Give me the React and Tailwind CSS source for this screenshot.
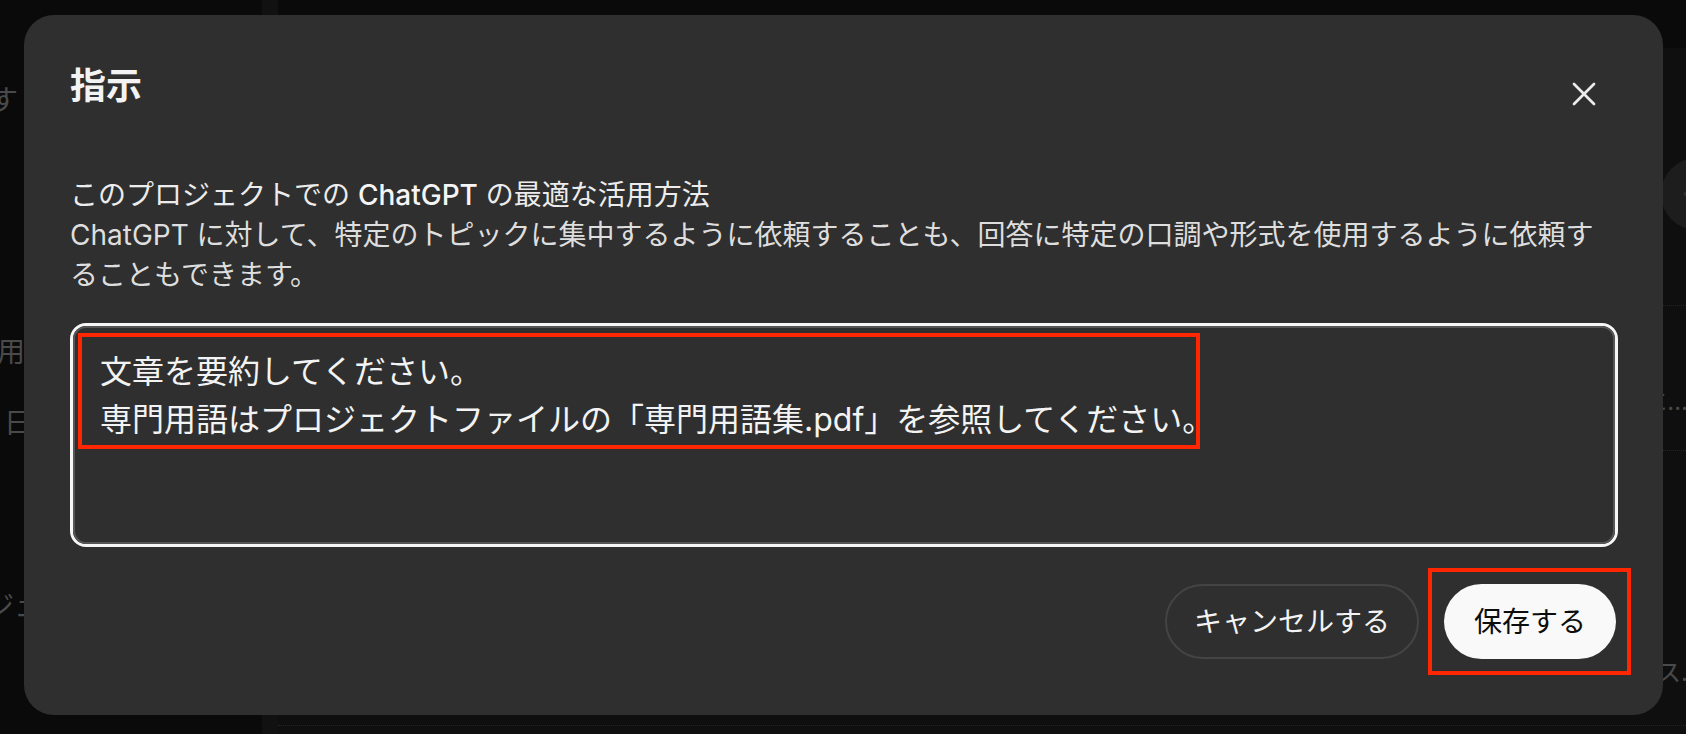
import React from "react";
import { X, ArrowUp } from "lucide-react";

// background page (dimmed by the overlay); only slivers of it show round the modal
const Background = () => {
  return (
    <div className="flex h-full w-full">
      <aside className="flex w-[262px] shrink-0 flex-col bg-[#191919] text-[28px] leading-[40px] text-[#b8b8b8]">
        <div className="mt-[80px] -ml-[38px] whitespace-nowrap">ます</div>
        <div className="mt-[212px] -ml-[3px] whitespace-nowrap">用語の整理</div>
        <div className="mt-[31px] ml-[4px] whitespace-nowrap">日報まとめ</div>
        <div className="mt-[143px] -ml-[14px] whitespace-nowrap">ジェクト一覧</div>
      </aside>
      <div className="w-[16px] shrink-0 bg-[#2c2c2c]" />
      <main className="flex min-w-0 flex-1 flex-col bg-[#1c1c1c]">
        <div className="h-[48px] shrink-0 bg-[#1a1a1a]" />
        <div className="flex flex-1 flex-col bg-[#272727]">
          <div className="mt-[110px] flex justify-end">
            <div className="-mr-[47px] flex h-[72px] w-[72px] items-center justify-center rounded-full bg-[#4a4a4a]">
              <ArrowUp size={40} strokeWidth={2} className="text-[#7a7a7a]" />
            </div>
          </div>
          <div className="mt-[75px] flex flex-col border-t border-dotted border-[#5a5a5a]">
            <div className="flex h-[145px] items-end justify-end border-b border-dotted border-[#5a5a5a] pb-[36px] text-[24px] leading-[24px] text-[#b8b8b8]">
              <span className="-mr-[2px] whitespace-nowrap">ファイルの説明に…</span>
            </div>
            <div className="flex h-[275px] items-end justify-end border-b border-dotted border-[#5a5a5a] pb-[40px] text-[24px] leading-[24px] text-[#b8b8b8]">
              <span className="-mr-[2px] whitespace-nowrap">使用するクラス.</span>
            </div>
          </div>
        </div>
      </main>
    </div>
  );
};

const App = () => {
  return (
    <div className="relative h-[734px] w-[1686px] overflow-hidden bg-[#0b0b0b] font-['Inter','Noto_Sans_CJK_JP',sans-serif]">
      <Background />

      {/* overlay + modal */}
      <div className="absolute inset-0 bg-black/60 pl-[24px] pt-[15px]">
        <div className="flex h-[700px] w-[1639px] flex-col rounded-[30px] bg-[#2f2f2f] pl-[46px] pr-[45px] pt-[43px] pb-[56px]">
          <div className="flex items-start justify-between">
            <h2 className="text-[36px] leading-[56px] font-semibold text-[#f3f3f3]">指示</h2>
            <button className="mr-[14px] mt-[16px] flex h-10 w-10 items-center justify-center text-[#ececec]">
              <X size={40} strokeWidth={1.6} />
            </button>
          </div>

          <div className="mt-[61px] text-[28px] leading-[40px]">
            <p className="whitespace-nowrap text-[#ececec]">
              このプロジェクトでの <span className="font-medium text-[#f5f5f5]">ChatGPT</span> の最適な活用方法
            </p>
            <p className="whitespace-nowrap text-[#dedede]">
              ChatGPT に対して、特定のトピックに集中するように依頼することも、回答に特定の口調や形式を使用するように依頼す
              <br />
              ることもできます。
            </p>
          </div>

          <div className="relative mt-[28px] h-[224px] rounded-[16px] border-[3px] border-[#f7f7f7]">
            <textarea
              className="h-full w-full resize-none rounded-[13px] border-2 border-[#565656] bg-transparent px-[25px] pt-[20px] text-[32px] leading-[48px] text-[#f3f3f3] outline-none"
              defaultValue={"文章を要約してください。\n専門用語はプロジェクトファイルの「専門用語集.pdf」を参照してください。"}
            />
            <div className="pointer-events-none absolute left-[5px] top-[7px] h-[116px] w-[1122px] border-4 border-[#ff2600]" />
          </div>

          <div className="mt-[37px] flex justify-end gap-[25px] pr-[2px]">
            <button className="flex h-[75px] w-[254px] items-center justify-center rounded-full border-2 border-[#444444] text-[28px] text-[#f3f3f3]">
              キャンセルする
            </button>
            <div className="relative">
              <button className="flex h-[75px] w-[172px] items-center justify-center rounded-full bg-[#f9f9f9] text-[28px] text-[#0d0d0d]">
                保存する
              </button>
              <div className="pointer-events-none absolute -bottom-[16px] -left-[16px] -right-[15px] -top-[16px] border-4 border-[#ff2600]" />
            </div>
          </div>
        </div>
      </div>
    </div>
  );
};

export default App;
